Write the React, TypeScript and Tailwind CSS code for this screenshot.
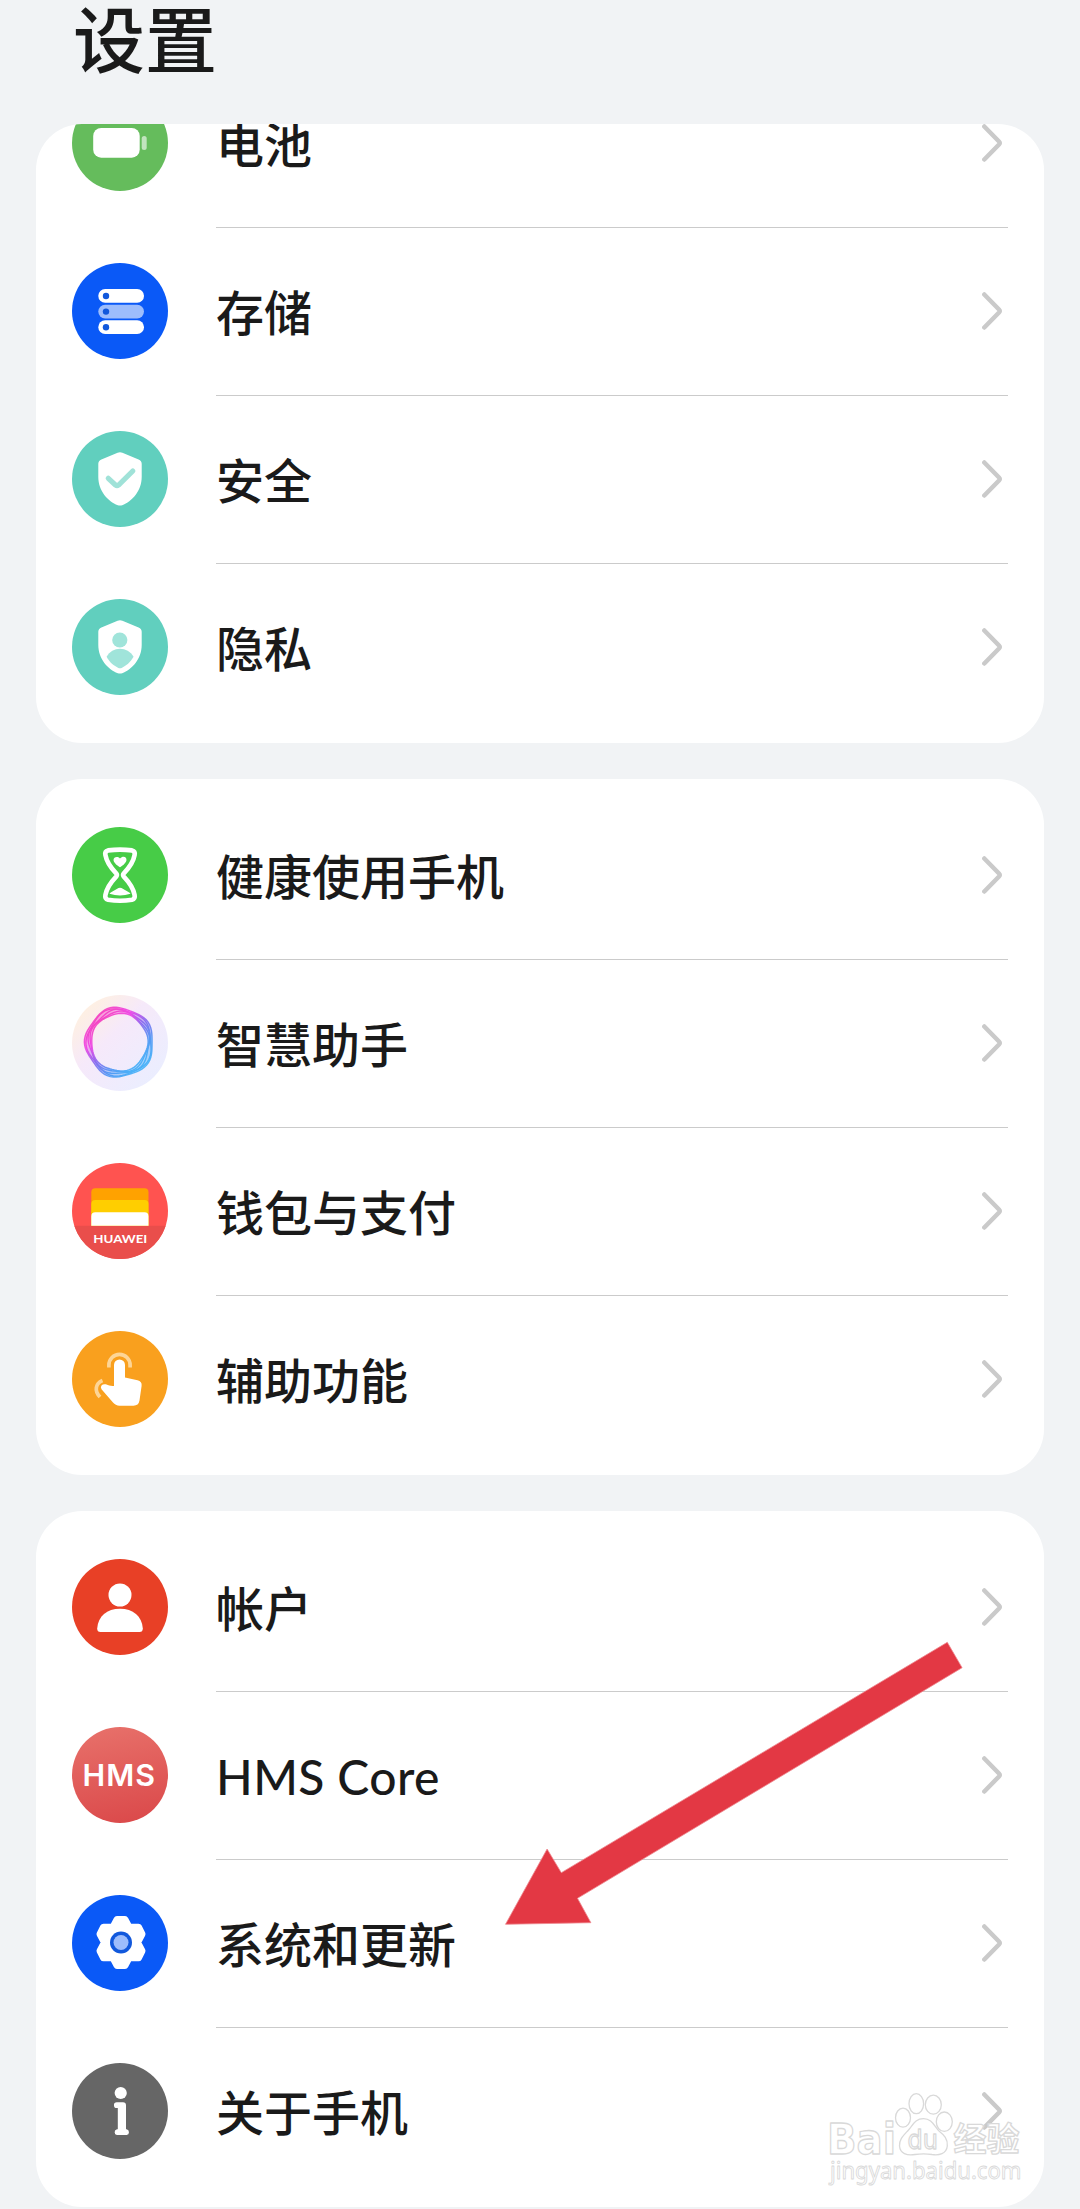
import type { ReactNode } from "react";

const SHIELD =
  "M45.6 21.8Q48 20.8 50.4 21.8L66.6 28.4Q69.7 29.8 69.7 32.8V46C69.7 60 60 70.5 50.2 74.2Q48 75 45.8 74.2C36 70.5 26.3 60 26.3 46V32.8Q26.3 29.8 29.4 28.4Z";

function Disc({ color, children }: { color: string; children: ReactNode }) {
  return (
    <svg viewBox="0 0 96 96" className="size-24 shrink-0">
      <circle cx="48" cy="48" r="48" fill={color} />
      {children}
    </svg>
  );
}

const Battery = (
  <Disc color="#65bc5c">
    <rect x="21.2" y="33" width="46.5" height="29.7" rx="8" fill="#fff" />
    <rect x="69.7" y="41" width="5" height="14" rx="2.5" fill="#fff" opacity="0.6" />
  </Disc>
);

const Storage = (
  <Disc color="#0a59f7">
    <rect x="26.3" y="26" width="45.7" height="13.7" rx="6.8" fill="#fff" />
    <rect x="26.3" y="41.7" width="45.7" height="13.7" rx="6.8" fill="#9dbdfc" />
    <rect x="26.3" y="57.3" width="45.7" height="13.7" rx="6.8" fill="#fff" />
    {[33, 48.6, 64.2].map((y) => (
      <circle key={y} cx="34" cy={y} r="3.2" fill="#1158dc" />
    ))}
  </Disc>
);

const Security = (
  <Disc color="#61cfbe">
    <path d={SHIELD} fill="#fff" />
    <path d="M36.3 47.3L43.4 54Q45 55.2 46.6 54L60.8 40" fill="none" stroke="#a0e2d8" strokeWidth="5.2" strokeLinecap="round" />
  </Disc>
);

const Privacy = (
  <Disc color="#61cfbe">
    <path d={SHIELD} fill="#fff" />
    <circle cx="47.8" cy="41" r="7.6" fill="#a0e4da" />
    <path d="M34.6 57.8C37.5 52.5 42.5 49.7 48 49.7S58.5 52.5 61.6 57.8C58.5 63.5 54 67 49.6 68.9Q48 69.5 46.4 68.9C42 67 37.5 63.5 34.6 57.8Z" fill="#a0e4da" />
  </Disc>
);

const Hourglass = (
  <Disc color="#47cc47">
    <path
      d="M36 23.4Q48 21.8 60 23.4Q63.4 24.2 62.6 28C61 37 55 43 51.6 46.6Q50.6 48 51.6 49.4C55 53 61 59 62.6 68Q63.4 72 60 72.8Q48 74.6 36 72.8Q32.6 72 33.4 68C35 59 41 53 44.4 49.4Q45.4 48 44.4 46.6C41 43 35 37 33.4 28Q32.6 24.2 36 23.4Z"
      fill="none"
      stroke="#fff"
      strokeWidth="4.6"
    />
    <path d="M48 31.5C45.5 29 41.5 30 41.5 33C41.7 36 46 39.3 48 40.2C50 39.3 54.2 36 54.5 33C54.5 29.3 50.5 28.8 48 31.5Z" fill="#fff" />
    <path d="M37.5 66.8Q38 65.8 40 64.8L46.5 61Q48 60.3 49.5 61L56 64.8Q58 65.8 58.5 66.8Q48 70 37.5 66.8Z" fill="#fff" />
  </Disc>
);

/* Closed five-lobed wave around the disc's centre. */
function wave(radius: number, amplitude: number, phase: number, squash = 0) {
  const points = Array.from({ length: 72 }, (_, i) => {
    const a = (i * 5 * Math.PI) / 180;
    const p = (phase * Math.PI) / 180;
    const r = radius + amplitude * Math.cos(5 * (a - p)) + squash * Math.cos(2 * (a - p));
    return `${(47.4 + r * Math.cos(a)).toFixed(2)} ${(47.3 + r * Math.sin(a)).toFixed(2)}`;
  });
  return `M${points.join("L")}Z`;
}

const OUTER_WAVE = wave(34.2, 1.2, -107, 0.4);
const INNER_WAVE = wave(28.4, 0.6, -76, 0.3);

const Assistant = (
  <Disc color="url(#haze)">
    <defs>
      <linearGradient id="haze" x1="0.1" y1="0.1" x2="0.9" y2="0.9">
        <stop offset="0" stopColor="#fff1df" />
        <stop offset="0.4" stopColor="#f6e9fa" />
        <stop offset="1" stopColor="#eaeeff" />
      </linearGradient>
      <linearGradient id="ring" x1="0.15" y1="0.1" x2="0.8" y2="0.9">
        <stop offset="0" stopColor="#f52fb8" />
        <stop offset="0.28" stopColor="#ee35e4" />
        <stop offset="0.52" stopColor="#7d5cee" />
        <stop offset="0.78" stopColor="#3f8ff4" />
        <stop offset="1" stopColor="#35aaf8" />
      </linearGradient>
    </defs>
    <path d={OUTER_WAVE + INNER_WAVE} fillRule="evenodd" fill="url(#ring)" opacity="0.4" />
    <g fill="none" stroke="url(#ring)" strokeWidth="1.4" opacity="0.8">
      <path d={OUTER_WAVE} />
      <path d={wave(32.8, 1.2, -112, 0.6)} />
      <path d={wave(31.2, 1.3, -95, 0.8)} />
      <path d={wave(29.8, 1.1, -84, 0.4)} />
      <path d={INNER_WAVE} />
    </g>
  </Disc>
);

const Wallet = (
  <Disc color="#ff5350">
    <path d="M2.3 62.7H93.7A48 48 0 0 1 2.3 62.7Z" fill="#e94e4b" />
    <path d="M19.3 62.7V29.3Q19.3 25.3 23.3 25.3H72.5Q76.5 25.3 76.5 29.3V62.7Z" fill="#ffa200" />
    <path d="M19.3 62.7V41Q19.3 37 23.3 37H72.5Q76.5 37 76.5 41V62.7Z" fill="#ffce00" />
    <path d="M19.3 62.7V53.5Q19.3 49.3 23.3 49.3H72.5Q76.5 49.3 76.5 53.5V62.7Z" fill="#fff" />
    <text x="21.3" y="79.8" textLength="54" lengthAdjust="spacingAndGlyphs" fill="#fff" className="font-['Lato'] text-[12px] font-bold">
      HUAWEI
    </text>
  </Disc>
);

const Touch = (
  <Disc color="#f9a01e">
    <path d="M42 55V34A5.5 5.5 0 0 1 53 34V46.5L65.5 49.3Q70.2 50.3 69.6 55L67.5 69.5Q66.6 74.7 61.5 74.7H47.5Q43.5 74.7 41 71.6L29.5 58.2Q28.3 56.3 29.5 54.6Q31 52.7 33.8 53.3Q38 55.5 42 55Z" fill="#fff" />
    <g fill="none" stroke="#fdd596" strokeWidth="3.7">
      <path d="M36.9 36.5V34A10.6 10.6 0 0 1 58.1 34V36.5" />
      <path d="M30.5 49.5C23.5 52.5 22 59.5 28 66" />
    </g>
  </Disc>
);

const Account = (
  <Disc color="#e84026">
    <circle cx="48" cy="36" r="11.5" fill="#fff" />
    <path d="M25.2 69.5C26 57 35 49.7 48 49.7S70 57 70.8 69.5Q70.8 73 67.5 73H28.5Q25.2 73 25.2 69.5Z" fill="#fff" />
  </Disc>
);

const Hms = (
  <Disc color="url(#coral)">
    <defs>
      <linearGradient id="coral" x1="0.4" y1="0" x2="0.6" y2="1">
        <stop offset="0" stopColor="#e76f69" />
        <stop offset="1" stopColor="#db4a4b" />
      </linearGradient>
    </defs>
    <text x="10.5" y="59" textLength="73.5" lengthAdjust="spacingAndGlyphs" fill="#fff" className="font-['Inter'] text-[30px] font-semibold tracking-[1px]">
      HMS
    </text>
  </Disc>
);

const Gear = (
  <Disc color="#0a59f7">
    <path
      d="M45 24.5H53L57 32.2H66.500L70 39L65.500 47.5L70 56L66.500 62.800H57L53 70.5H45L41 62.800H31.500L28 56L32.500 47.5L28 39L31.500 32.200H41Z"
      fill="#fff"
      stroke="#fff"
      strokeWidth="7"
      strokeLinejoin="round"
    />
    <circle cx="49" cy="47.5" r="11" fill="#1158dc" />
    <circle cx="49" cy="47.5" r="7.5" fill="#9dbdfc" />
  </Disc>
);

const Info = (
  <Disc color="#666666">
    <circle cx="48.7" cy="30" r="6.1" fill="#fff" />
    <path d="M44.8 39.3H51Q54 39.3 54 42.3V66.3H54.6A2.9 2.9 0 0 1 54.6 72H45A2.9 2.9 0 0 1 45 66.3H45.8V45H44.8A2.85 2.85 0 0 1 44.8 39.3Z" fill="#fff" />
  </Disc>
);

const Chevron = () => (
  <svg viewBox="0 0 27 40" className="-mr-px mb-0.5 h-10 w-[27px] shrink-0" fill="none">
    <path d="M2.3 3.5L17 18.5Q18.4 20 17 21.5L2.3 36.5" stroke="#cacaca" strokeWidth="4.5" strokeLinecap="round" />
  </svg>
);

type Item = { icon: ReactNode; label: string; font?: string };

function Row({ icon, label, first, font = "" }: Item & { first: boolean }) {
  return (
    <li className="flex h-[168px] items-center gap-12 px-9">
      {icon}
      <div className={`flex h-full flex-1 items-center justify-between border-t ${first ? "border-transparent" : "border-[#cbcbcb]"}`}>
        <span className={`mb-[3px] text-[48px] leading-none font-medium ${font}`}>{label}</span>
        <Chevron />
      </div>
    </li>
  );
}

function Card({ items, listClass = "" }: { items: Item[]; listClass?: string }) {
  return (
    <section className="overflow-hidden rounded-[46px] bg-white pb-3">
      <ul className={listClass}>
        {items.map((item, i) => (
          <Row key={item.label} {...item} first={i === 0} />
        ))}
      </ul>
    </section>
  );
}

const device: Item[] = [
  { icon: Battery, label: "电池" },
  { icon: Storage, label: "存储" },
  { icon: Security, label: "安全" },
  { icon: Privacy, label: "隐私" },
];
const features: Item[] = [
  { icon: Hourglass, label: "健康使用手机" },
  { icon: Assistant, label: "智慧助手" },
  { icon: Wallet, label: "钱包与支付" },
  { icon: Touch, label: "辅助功能" },
];
const system: Item[] = [
  { icon: Account, label: "帐户" },
  { icon: Hms, label: "HMS Core", font: "font-['Lato'] pt-1.5 tracking-[0.4px]" },
  { icon: Gear, label: "系统和更新" },
  { icon: Info, label: "关于手机" },
];

function Watermark() {
  return (
    <svg viewBox="0 0 210 100" className="absolute top-[2090px] left-[821px] h-[100px] w-[210px]">
      <g fill="#ffffff" stroke="#d9d9d9" strokeWidth="1.3" fillOpacity="0.75" strokeLinejoin="round">
        <text x="6" y="63.5" textLength="69" lengthAdjust="spacingAndGlyphs" className="font-['DejaVu_Sans'] text-[42px] font-bold">Bai</text>
        <ellipse cx="82" cy="27.7" rx="7.5" ry="9.5" />
        <ellipse cx="95.3" cy="13.7" rx="7.3" ry="10" />
        <ellipse cx="112.3" cy="14.7" rx="8" ry="9.5" />
        <ellipse cx="123.3" cy="31.7" rx="8" ry="9.7" />
        <path d="M102.5 28.7C111 28.7 113 36 118 41C123 45 127 49 126.3 56C125.5 64 118 65.5 111 64.5C105 63.5 100 63.5 94 64.5C86 66 79 63.5 78.5 56C78 49 83 45 87.5 40C92 35 94 28.7 102.5 28.7Z" />
        <text x="86.5" y="58.7" textLength="30.5" lengthAdjust="spacingAndGlyphs" className="font-['DejaVu_Sans'] text-[26px]">du</text>
        <text x="132.5" y="61" textLength="66" className="font-['Noto_Sans_CJK_SC'] text-[33px] font-bold">经验</text>
        <text x="9" y="89" textLength="191.5" lengthAdjust="spacingAndGlyphs" strokeWidth="0.9" className="font-['Noto_Sans'] text-[24px]">jingyan.baidu.com</text>
      </g>
    </svg>
  );
}

export default function App() {
  return (
    <main className="relative h-[2209px] w-[1080px] overflow-hidden bg-[#f1f3f5] font-['Noto_Sans_CJK_SC',sans-serif] text-[#1a1a1a]">
      <header className="flex h-[124px] items-start px-[73px]">
        <h1 className="text-[72px] leading-[72px] font-medium">设置</h1>
      </header>
      <div className="flex flex-col gap-9 px-9">
        <Card items={device} listClass="-mt-[65px]" />
        <Card items={features} listClass="pt-3" />
        <Card items={system} listClass="pt-3" />
      </div>
      <svg viewBox="0 0 460 285" className="absolute top-[1641px] left-[504px] h-[285px] w-[460px]">
        <path d="M1.5 283.3L43.1 208L57.3 231.7L443.3 1.3L458.1 26.7L73.5 257.3L86.9 281.7Z" fill="#e33844" stroke="#ee8a91" strokeWidth="0.8" />
      </svg>
      <Watermark />
    </main>
  );
}
